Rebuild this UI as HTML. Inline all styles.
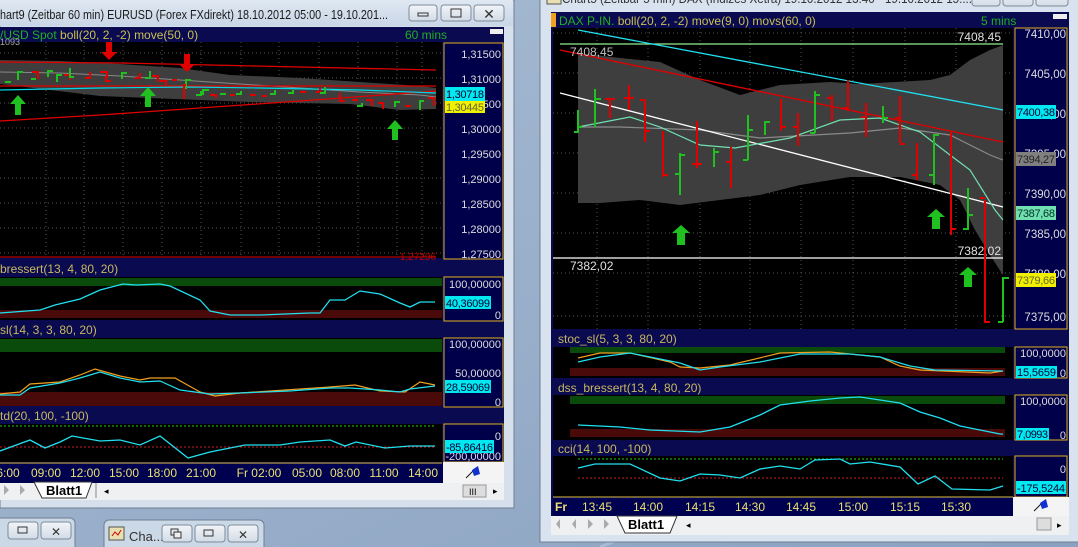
<!DOCTYPE html>
<html><head><meta charset="utf-8">
<style>
html,body{margin:0;padding:0;width:1078px;height:547px;overflow:hidden;background:#8fa6c2}
svg{display:block}
text{font-family:"Liberation Sans",sans-serif}
</style></head><body>
<svg width="1078" height="547" viewBox="0 0 1078 547" xmlns="http://www.w3.org/2000/svg">
<defs>
<linearGradient id="desk" x1="0" y1="0" x2="1" y2="1"><stop offset="0" stop-color="#a9bcd4"/><stop offset="1" stop-color="#8aa2c0"/></linearGradient>
<linearGradient id="tb" x1="0" y1="0" x2="0" y2="1"><stop offset="0" stop-color="#dfe8f2"/><stop offset="1" stop-color="#c9d6e6"/></linearGradient>
<linearGradient id="btn" x1="0" y1="0" x2="0" y2="1"><stop offset="0" stop-color="#f2f5f9"/><stop offset="1" stop-color="#d2dbe6"/></linearGradient>
</defs>
<rect width="1078" height="547" fill="url(#desk)"/>
<path d="M600 547 Q760 480 1000 520" stroke="#b8c8dc" stroke-width="3" fill="none" opacity=".6"/>

<!-- ========== LEFT WINDOW ========== -->
<rect x="0" y="0" width="514" height="508" fill="#d5e0ec" stroke="#6f7f92"/>
<rect x="0" y="0" width="513" height="26" fill="url(#tb)"/>
<text x="0" y="19" font-size="13" fill="#1a1a1a" textLength="388" lengthAdjust="spacingAndGlyphs">hart9 (Zeitbar 60 min)  EURUSD (Forex FXdirekt) 18.10.2012 05:00 - 19.10.201...</text>
<g stroke="#7d8a99" fill="url(#btn)">
<rect x="409" y="5" width="28" height="16" rx="3"/><rect x="441" y="5" width="30" height="16" rx="3"/><rect x="474" y="5" width="30" height="16" rx="3"/></g>
<rect x="418" y="13" width="10" height="3" fill="none" stroke="#333"/>
<rect x="451" y="9" width="10" height="8" fill="none" stroke="#333"/>
<text x="489" y="19" font-size="14" text-anchor="middle" fill="#333">✕</text>

<rect x="0" y="27" width="504" height="456" fill="#0a0a50"/>
<text x="0" y="39" font-size="12" fill="#20b020">/USD Spot <tspan fill="#c8c050">boll(20, 2, -2) move(50, 0)</tspan></text>
<text x="405" y="39" font-size="12" fill="#20b020">60 mins</text>
<rect x="490" y="29" width="13" height="5" fill="#eee"/>
<rect x="0" y="42" width="442" height="216" fill="#000"/>
<g stroke="#555" stroke-dasharray="1,3">
<line x1="46" y1="42" x2="46" y2="258"/><line x1="84" y1="42" x2="84" y2="258"/><line x1="123" y1="42" x2="123" y2="258"/><line x1="162" y1="42" x2="162" y2="258"/><line x1="201" y1="42" x2="201" y2="258"/><line x1="241" y1="42" x2="241" y2="258"/><line x1="279" y1="42" x2="279" y2="258"/><line x1="319" y1="42" x2="319" y2="258"/><line x1="358" y1="42" x2="358" y2="258"/><line x1="397" y1="42" x2="397" y2="258"/><line x1="422" y1="42" x2="422" y2="258"/>
<line x1="0" y1="53" x2="442" y2="53"/><line x1="0" y1="78" x2="442" y2="78"/><line x1="0" y1="103" x2="442" y2="103"/><line x1="0" y1="128" x2="442" y2="128"/><line x1="0" y1="153" x2="442" y2="153"/><line x1="0" y1="178" x2="442" y2="178"/><line x1="0" y1="203" x2="442" y2="203"/><line x1="0" y1="228" x2="442" y2="228"/><line x1="0" y1="253" x2="442" y2="253"/>
</g>
<polygon points="0,60 60,61 120,64 180,68 230,75 300,78 360,82 420,86 436,88 436,109 400,110 350,104 300,103 250,102 200,100 150,98 100,96 50,90 0,84" fill="#3e3e3e"/>
<polyline points="0,72 60,73 120,76 180,80 240,84 300,88 360,92 420,95 436,97" fill="none" stroke="#888"/>
<polyline points="0,62 120,63 300,67 436,70" fill="none" stroke="#e00000" stroke-width="1.3"/>
<line x1="0" y1="86" x2="436" y2="86" stroke="#e00000" stroke-width="1.3"/>
<polyline points="0,121 100,115 200,108 300,101 436,91" fill="none" stroke="#e00000" stroke-width="1.3"/>
<polyline points="0,90 100,88 190,87 260,88 360,90 436,93" fill="none" stroke="#00d8e8" stroke-width="1.2"/>
<line x1="0" y1="257" x2="436" y2="257" stroke="#e00000"/>
<g stroke-width="2" fill="none">
<path d="M5 82h6M18 80v-8h5M31 79h5M48 77v-6h5" stroke="#20c020"/>
<path d="M32 72h6v7M64 75h6v5M85 78h5v-6" stroke="#e00000"/>
<path d="M57 82v-7h5M70 68v9h4M122 79v-6h5" stroke="#20c020"/>
<path d="M100 72h7v6M106 76v5h5M135 78h5v-5M152 76h6v6M160 81h6v5M172 80h5" stroke="#e00000"/>
<path d="M145 78h5v-7M186 89v-9h5M196 95h5v-4M203 95v-5h6M220 94h6M236 94h5v-3M270 94h5v-4M288 93h5v-3" stroke="#20c020"/>
<path d="M186 85h-2v14M210 95h6v3M230 95h5M250 95h6M262 96h5M300 92h6M316 92h4v-4M340 93v8h5M352 100h6M366 100h6v6M378 103h5v6M405 106h6" stroke="#e00000"/>
<path d="M320 93h5v-6M357 106h5v-3M395 107v-5h5M420 110v-9h4" stroke="#20c020"/>
<path d="M428 98h6v8" stroke="#e00000"/>
</g>
<g fill="#e00000"><rect x="106" y="42" width="6" height="10"/><polygon points="101,52 117,52 109,60"/><rect x="184" y="54" width="6" height="10"/><polygon points="179,64 195,64 187,72"/></g>
<g fill="#20c020"><polygon points="10,104 18,95 26,104"/><rect x="15" y="104" width="6" height="11"/><polygon points="140,96 148,87 156,96"/><rect x="145" y="96" width="6" height="11"/><polygon points="387,129 395,120 403,129"/><rect x="392" y="129" width="6" height="11"/></g>
<text x="436" y="260" font-size="10" fill="#c00000" text-anchor="end">1,27296</text>
<text x="0" y="45" font-size="9" fill="#aaa">1093</text>
<rect x="444" y="43" width="59" height="216" fill="#00004a" stroke="#e0b020"/>
<g font-size="11" fill="#dcdcdc" text-anchor="end">
<text x="501" y="58">1,31500</text><text x="501" y="83">1,31000</text><text x="501" y="108">1,30500</text><text x="501" y="133">1,30000</text><text x="501" y="158">1,29500</text><text x="501" y="183">1,29000</text><text x="501" y="208">1,28500</text><text x="501" y="233">1,28000</text><text x="501" y="258">1,27500</text></g>
<rect x="445" y="87" width="40" height="14" fill="#00e8f0"/><text x="446" y="98" font-size="11" fill="#003" textLength="38">1,30718</text>
<rect x="445" y="101" width="40" height="12" fill="#f0f000"/><text x="446" y="111" font-size="11" fill="#663" textLength="38">1,30445</text>
<text x="0" y="273" font-size="12" fill="#c8b860">bressert(13, 4, 80, 20)</text>
<rect x="0" y="277" width="442" height="43" fill="#000"/>
<rect x="0" y="278" width="442" height="8" fill="#0a4a0a"/><rect x="0" y="310" width="442" height="8" fill="#4a0a0a"/>
<polyline points="0,313 40,310 55,305 80,299 100,290 123,284 136,285 160,284 170,286 200,300 210,311 230,315 260,315 310,313 320,313 330,300 345,300 360,291 380,294 400,303 410,307 420,302 435,302" fill="none" stroke="#20e0f0" stroke-width="1.3"/>
<rect x="444" y="277" width="59" height="44" fill="#00004a" stroke="#e0b020"/>
<text x="501" y="288" font-size="11" fill="#dcdcdc" text-anchor="end">100,00000</text><text x="501" y="319" font-size="11" fill="#dcdcdc" text-anchor="end">0</text>
<rect x="445" y="296" width="46" height="13" fill="#00e8f0"/><text x="446" y="307" font-size="11" fill="#003" textLength="44">40,36099</text>
<text x="0" y="334" font-size="12" fill="#c8b860">sl(14, 3, 3, 80, 20)</text>
<rect x="0" y="338" width="442" height="68" fill="#000"/>
<rect x="0" y="339" width="442" height="13" fill="#0a4a0a"/><rect x="0" y="392" width="442" height="14" fill="#4a0a0a"/>
<polyline points="0,394 20,392 30,384 60,382 80,375 95,369 120,376 140,380 150,378 175,378 200,392 215,396 240,393 330,387 355,385 380,391 405,392 420,382 435,385" fill="none" stroke="#f0a020" stroke-width="1.2"/>
<polyline points="0,395 20,395 30,388 60,383 80,378 100,372 120,378 140,382 160,381 180,390 210,394 240,393 290,391 330,388 350,388 380,390 400,392 410,389 435,386" fill="none" stroke="#20e0f0" stroke-width="1.2"/>
<rect x="444" y="338" width="59" height="69" fill="#00004a" stroke="#e0b020"/>
<g font-size="11" fill="#dcdcdc" text-anchor="end"><text x="501" y="348">100,00000</text><text x="501" y="377">50,00000</text><text x="501" y="406">0</text></g>
<rect x="445" y="380" width="46" height="13" fill="#00e8f0"/><text x="446" y="391" font-size="11" fill="#003" textLength="44">28,59069</text>
<text x="0" y="420" font-size="12" fill="#c8b860">td(20, 100, -100)</text>
<rect x="0" y="424" width="442" height="38" fill="#000"/>
<line x1="0" y1="426" x2="436" y2="426" stroke="#20d020" stroke-dasharray="2,2"/>
<line x1="0" y1="447" x2="436" y2="447" stroke="#d02020" stroke-dasharray="2,2"/>
<polyline points="0,451 30,440 45,448 60,442 72,436 100,441 120,440 140,445 160,436 188,458 210,452 245,445 280,445 300,442 330,440 345,446 356,442 385,448 410,446 435,446" fill="none" stroke="#20e0f0" stroke-width="1.3"/>
<rect x="444" y="424" width="59" height="38" fill="#00004a" stroke="#e0b020"/>
<text x="501" y="440" font-size="11" fill="#dcdcdc" text-anchor="end">0</text><text x="501" y="460" font-size="11" fill="#dcdcdc" text-anchor="end">-200,00000</text>
<rect x="445" y="440" width="49" height="13" fill="#00e8f0"/><text x="446" y="451" font-size="11" fill="#003" textLength="47">-85,86416</text>
<rect x="0" y="462" width="443" height="21" fill="#000050"/><line x1="0" y1="463" x2="442" y2="463" stroke="#e0c040"/>
<g font-size="12" fill="#e8e070" text-anchor="middle"><text x="8" y="477">6:00</text><text x="46" y="477">09:00</text><text x="85" y="477">12:00</text><text x="124" y="477">15:00</text><text x="162" y="477">18:00</text><text x="201" y="477">21:00</text><text x="259" y="477">Fr 02:00</text><text x="307" y="477">05:00</text><text x="345" y="477">08:00</text><text x="384" y="477">11:00</text><text x="423" y="477">14:00</text></g>
<rect x="443" y="462" width="61" height="21" fill="#f4f4f4"/>
<path d="M466 478 L476 468" stroke="#111"/><polygon points="472,470 478,466 480,474 474,476" fill="#1030d0"/>
<rect x="0" y="483" width="504" height="17" fill="#eef0f2"/>
<g fill="#aaa"><polygon points="4,485 9,490 4,495"/><polygon points="20,485 25,490 20,495"/></g>
<polygon points="34,482 42,498 86,498 92,482" fill="#fff" stroke="#333"/>
<text x="46" y="495" font-size="13" font-weight="bold" fill="#000">Blatt1</text>
<line x1="96" y1="483" x2="96" y2="498" stroke="#888"/><text x="104" y="494" font-size="9">◂</text>
<rect x="463" y="485" width="23" height="12" fill="#ddd" stroke="#999"/><text x="469" y="495" font-size="9">III</text><text x="493" y="494" font-size="9">▸</text>
<rect x="-5" y="518" width="80" height="35" rx="5" fill="#cbd8e6" stroke="#6f7f92"/>
<rect x="8" y="522" width="30" height="17" rx="3" fill="url(#btn)" stroke="#7d8a99"/><rect x="41" y="522" width="30" height="17" rx="3" fill="url(#btn)" stroke="#7d8a99"/>
<rect x="18" y="527" width="9" height="6" fill="none" stroke="#333"/><text x="56" y="536" font-size="12" text-anchor="middle" fill="#333">✕</text>
<rect x="104" y="520" width="160" height="35" rx="5" fill="#cbd8e6" stroke="#6f7f92"/>
<rect x="109" y="527" width="15" height="13" fill="#e8e0b0" stroke="#555"/><path d="M112 536 l3-4 3 3 3-5" stroke="#c00" fill="none"/>
<text x="129" y="541" font-size="13" fill="#333">Cha...</text>
<rect x="162" y="525" width="30" height="17" rx="3" fill="url(#btn)" stroke="#7d8a99"/><rect x="195" y="525" width="30" height="17" rx="3" fill="url(#btn)" stroke="#7d8a99"/><rect x="228" y="525" width="30" height="17" rx="3" fill="url(#btn)" stroke="#7d8a99"/>
<rect x="204" y="530" width="9" height="6" fill="none" stroke="#333"/><text x="243" y="539" font-size="12" text-anchor="middle" fill="#333">✕</text>
<rect x="171" y="529" width="7" height="6" fill="none" stroke="#333"/><rect x="174" y="532" width="7" height="6" fill="#eee" stroke="#333"/>

<!-- ========== RIGHT WINDOW ========== -->
<rect x="540" y="-2" width="540" height="544" fill="#d8e3ef" stroke="#6f7f92"/>
<text x="562" y="3" font-size="13" fill="#333" textLength="410" lengthAdjust="spacingAndGlyphs">Chart5 (Zeitbar 5 min)  DAX (Indizes Xetra) 19.10.2012 13:40 - 19.10.2012 15:...</text>
<rect x="547" y="-6" width="14" height="10" fill="#e8e0b0" stroke="#555"/>
<g stroke="#7d8a99" fill="url(#btn)"><rect x="972" y="-8" width="28" height="14" rx="3"/><rect x="1003" y="-8" width="30" height="14" rx="3"/><rect x="1036" y="-8" width="32" height="14" rx="3"/></g>
<rect x="551" y="12" width="518" height="504" fill="#0a0a50"/>
<rect x="551" y="13" width="5" height="14" fill="#f0a020"/>
<text x="559" y="25" font-size="12" fill="#20b020">DAX P-IN. <tspan fill="#c8c050">boll(20, 2, -2) move(9, 0) movs(60, 0)</tspan></text>
<text x="981" y="25" font-size="12" fill="#20b020">5 mins</text>
<rect x="1053" y="14" width="14" height="5" fill="#eee"/>
<rect x="553" y="28" width="460" height="301" fill="#000"/>
<g stroke="#555" stroke-dasharray="1,3">
<line x1="597" y1="28" x2="597" y2="329"/><line x1="648" y1="28" x2="648" y2="329"/><line x1="700" y1="28" x2="700" y2="329"/><line x1="750" y1="28" x2="750" y2="329"/><line x1="801" y1="28" x2="801" y2="329"/><line x1="853" y1="28" x2="853" y2="329"/><line x1="905" y1="28" x2="905" y2="329"/><line x1="956" y1="28" x2="956" y2="329"/>
<line x1="553" y1="33" x2="1013" y2="33"/><line x1="553" y1="73" x2="1013" y2="73"/><line x1="553" y1="113" x2="1013" y2="113"/><line x1="553" y1="153" x2="1013" y2="153"/><line x1="553" y1="193" x2="1013" y2="193"/><line x1="553" y1="233" x2="1013" y2="233"/><line x1="553" y1="273" x2="1013" y2="273"/><line x1="553" y1="316" x2="1013" y2="316"/>
</g>
<polygon points="578,53 620,58 660,62 700,80 740,95 780,85 830,82 860,84 930,80 950,75 970,60 990,50 1003,45 1003,275 990,255 975,230 960,200 940,185 900,177 850,177 800,185 760,195 720,200 680,205 640,200 600,203 578,203" fill="#3e3e3e"/>
<polyline points="578,127 620,127 700,130 760,138 850,133 900,128 950,135 990,155 1003,160" fill="none" stroke="#8a8a8a" stroke-width="1.2"/>
<line x1="560" y1="44" x2="1003" y2="44" stroke="#90f090" stroke-width="1.3"/>
<line x1="553" y1="258" x2="1003" y2="258" stroke="#fff" stroke-width="1.3"/>
<line x1="578" y1="30" x2="1003" y2="110" stroke="#20e0f0" stroke-width="1.3"/>
<line x1="560" y1="50" x2="1003" y2="142" stroke="#e00000" stroke-width="1.3"/>
<line x1="560" y1="93" x2="1003" y2="207" stroke="#fff" stroke-width="1.3"/>
<polyline points="578,127 630,117 660,127 700,145 735,148 790,138 840,120 880,118 920,132 950,155 970,170 995,210 1003,220" fill="none" stroke="#70e0b0" stroke-width="1.2"/>
<text x="1001" y="41" font-size="12" fill="#e0e0e0" text-anchor="end">7408,45</text>
<text x="570" y="56" font-size="12" fill="#c0c0c0">7408,45</text>
<text x="1001" y="255" font-size="12" fill="#e0e0e0" text-anchor="end">7382,02</text>
<text x="570" y="270" font-size="12" fill="#e0e0e0">7382,02</text>
<g stroke-width="2" fill="none">
<path d="M578 110v23M578 132h-4M578 127h4M595 89v38M595 99h6M680 153v42M680 174h-5M680 155h5M714 148v19M714 152h5M748 115v45M748 160h-5M748 130h5M765 121v14M765 122h5M815 91v42M815 133h-5M815 95h5M883 106v17M883 118h5M934 134v51M934 175h-5M934 135h5M968 188v42M968 229h-5M968 215h5M1003 277v45M1003 322h-5M1003 278h6" stroke="#20c020"/>
<path d="M610 98v20M610 99h-5M610 99h5M629 85v25M629 98h-5M629 98h5M645 100v42M645 100h-5M645 131h5M663 131v46M663 175h5M697 121v47M697 164h-5M697 164h5M731 147v41M731 162h-5M781 99v32M781 127h5M798 113v33M798 127h-5M832 95v26M832 98h-5M848 80v31M848 108h-5M866 103v34M866 117h-5M900 96v47M900 118h-5M900 144h5M917 143v37M917 175h-5M951 132v103M951 229h5M985 200v123M985 198h-5M985 322h5" stroke="#e00000"/>
</g>
<g fill="#20c020"><polygon points="672,233 681,225 690,233"/><rect x="677" y="233" width="8" height="12"/><polygon points="927,217 936,209 945,217"/><rect x="932" y="217" width="8" height="12"/><polygon points="959,275 968,267 977,275"/><rect x="964" y="275" width="8" height="12"/></g>
<rect x="1015" y="28" width="52" height="301" fill="#00004a" stroke="#e0b020"/>
<g font-size="11.5" fill="#dcdcdc" text-anchor="end"><text x="1066" y="38">7410,00</text><text x="1066" y="78">7405,00</text><text x="1066" y="118">7400,00</text><text x="1066" y="158">7395,00</text><text x="1066" y="198">7390,00</text><text x="1066" y="238">7385,00</text><text x="1066" y="278">7380,00</text><text x="1066" y="321">7375,00</text></g>
<rect x="1016" y="105" width="40" height="14" fill="#00e8f0"/><text x="1017" y="116" font-size="11" fill="#003" textLength="38">7400,38</text>
<rect x="1016" y="152" width="40" height="14" fill="#808080"/><text x="1017" y="163" font-size="11" fill="#222" textLength="38">7394,27</text>
<rect x="1016" y="206" width="40" height="14" fill="#70e0b0"/><text x="1017" y="217" font-size="11" fill="#032" textLength="38">7387,68</text>
<rect x="1016" y="273" width="40" height="14" fill="#f0f000"/><text x="1017" y="284" font-size="11" fill="#663" textLength="38">7379,66</text>
<text x="558" y="343" font-size="12" fill="#c8b860">stoc_sl(5, 3, 3, 80, 20)</text>
<rect x="553" y="347" width="460" height="31" fill="#000"/>
<rect x="570" y="347" width="435" height="6" fill="#0a4a0a"/><rect x="570" y="368" width="435" height="8" fill="#4a0a0a"/>
<polyline points="578,358 600,353 630,353 670,362 680,367 700,368 730,365 780,353 830,352 880,357 900,366 920,370 990,373 1003,371" fill="none" stroke="#f0a020" stroke-width="1.2"/>
<polyline points="578,362 600,357 630,353 650,357 680,363 700,370 720,367 760,362 800,354 850,354 880,357 910,366 935,370 1003,371" fill="none" stroke="#20e0f0" stroke-width="1.2"/>
<rect x="1015" y="347" width="52" height="31" fill="#00004a" stroke="#e0b020"/>
<text x="1066" y="357" font-size="11" fill="#dcdcdc" text-anchor="end">100,0000</text><text x="1066" y="377" font-size="11" fill="#dcdcdc" text-anchor="end">0</text>
<rect x="1016" y="366" width="41" height="12" fill="#00e8f0"/><text x="1017" y="376" font-size="11" fill="#003" textLength="39">15,5659</text>
<text x="558" y="392" font-size="12" fill="#c8b860">dss_bressert(13, 4, 80, 20)</text>
<rect x="553" y="395" width="460" height="45" fill="#000"/>
<rect x="570" y="396" width="435" height="8" fill="#0a4a0a"/><rect x="570" y="429" width="435" height="8" fill="#4a0a0a"/>
<polyline points="578,425 620,427 650,430 700,432 730,427 760,415 780,405 810,401 840,398 860,397 880,400 900,403 920,412 940,418 960,426 1000,434 1003,434" fill="none" stroke="#20e0f0" stroke-width="1.3"/>
<rect x="1015" y="395" width="52" height="45" fill="#00004a" stroke="#e0b020"/>
<text x="1066" y="405" font-size="11" fill="#dcdcdc" text-anchor="end">100,0000</text><text x="1066" y="439" font-size="11" fill="#dcdcdc" text-anchor="end">0</text>
<rect x="1016" y="428" width="33" height="12" fill="#00e8f0"/><text x="1017" y="438" font-size="11" fill="#003" textLength="31">7,0993</text>
<text x="558" y="453" font-size="12" fill="#c8b860">cci(14, 100, -100)</text>
<rect x="553" y="456" width="460" height="41" fill="#000"/>
<line x1="578" y1="459" x2="1003" y2="459" stroke="#20d020" stroke-dasharray="2,2"/>
<line x1="578" y1="478" x2="1003" y2="478" stroke="#d02020" stroke-dasharray="2,2"/>
<polyline points="578,468 595,464 630,464 660,478 680,481 700,474 720,475 740,478 760,469 780,466 800,469 815,460 840,459 850,464 870,462 900,467 918,484 935,476 952,489 990,490 1003,486" fill="none" stroke="#20e0f0" stroke-width="1.3"/>
<rect x="1015" y="456" width="52" height="41" fill="#00004a" stroke="#e0b020"/>
<text x="1066" y="473" font-size="11" fill="#dcdcdc" text-anchor="end">0</text>
<rect x="1016" y="481" width="50" height="13" fill="#00e8f0"/><text x="1017" y="492" font-size="11" fill="#003" textLength="48">-175,5244</text>
<rect x="553" y="497" width="460" height="19" fill="#000050"/><line x1="553" y1="497" x2="1013" y2="497" stroke="#e0c040"/>
<g font-size="12" fill="#e8e070" text-anchor="middle"><text x="561" y="511" font-weight="bold">Fr</text><text x="597" y="511">13:45</text><text x="648" y="511">14:00</text><text x="700" y="511">14:15</text><text x="750" y="511">14:30</text><text x="801" y="511">14:45</text><text x="853" y="511">15:00</text><text x="905" y="511">15:15</text><text x="956" y="511">15:30</text></g>
<rect x="1013" y="497" width="56" height="19" fill="#f4f4f4"/>
<path d="M1034 511 L1044 501" stroke="#111"/><polygon points="1040,503 1046,499 1048,507 1042,509" fill="#1030d0"/>
<rect x="551" y="516" width="518" height="19" fill="#eef0f2"/>
<g fill="#aaa"><polygon points="560,519 556,524 560,529"/><polygon points="576,519 572,524 576,529"/><polygon points="588,519 593,524 588,529"/><polygon points="604,519 609,524 604,529"/></g>
<polygon points="617,516 625,533 670,533 677,516" fill="#fff" stroke="#333"/>
<text x="628" y="529" font-size="13" font-weight="bold" fill="#000">Blatt1</text>
<text x="686" y="528" font-size="9">◂</text>
<rect x="1037" y="518" width="14" height="12" fill="#ddd" stroke="#999"/><text x="1057" y="528" font-size="9">▸</text>
</svg>
</body></html>
